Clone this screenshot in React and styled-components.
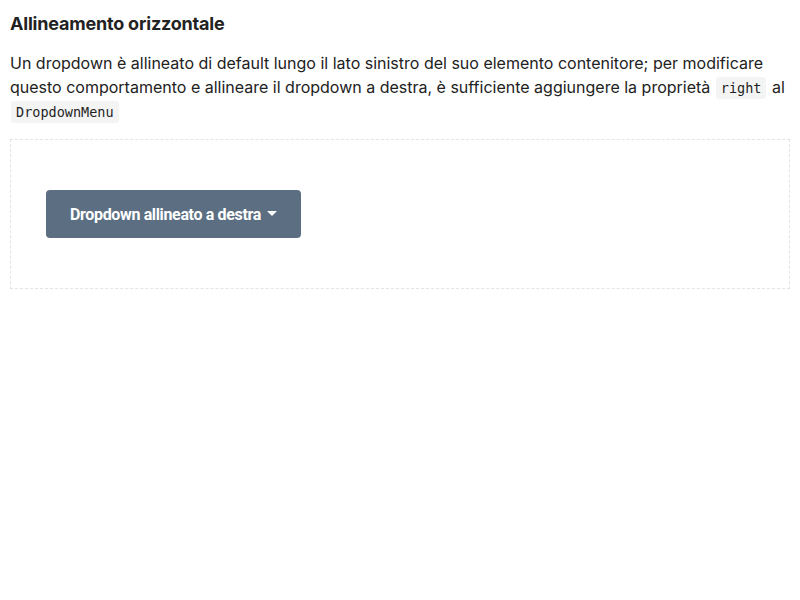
import React from 'react';
import styled, { createGlobalStyle } from 'styled-components';

const Global = createGlobalStyle`
  body {
    margin: 0;
    background: #fff;
    font-family: Inter, "Liberation Sans", sans-serif;
    color: #1f1f1f;
  }
`;

const Page = styled.div`
  padding: 10px 10px;
`;

const Title = styled.h3`
  margin: 2px 0 15px;
  font-size: 18px;
  font-weight: 700;
  line-height: 24px;
  letter-spacing: -0.2px;
  color: #222;
`;

const Text = styled.p`
  margin: 0 0 16px;
  font-size: 16px;
  line-height: 24px;
  color: #222;
`;

const Code = styled.code`
  font-family: "DejaVu Sans Mono", "Liberation Mono", monospace;
  font-size: 13.5px;
  line-height: 1;
  background: #f4f4f5;
  border-radius: 3px;
  padding: 3px 5px;
  margin: 0 1px;
  color: #1f1f1f;
`;

const Example = styled.div`
  border: 1px dashed #e3e4e6;
  padding: 50px 35px;
`;

const Button = styled.button`
  display: inline-flex;
  align-items: center;
  gap: 6px;
  height: 48px;
  padding: 0 24px;
  border: none;
  border-radius: 4px;
  background: #5c6f82;
  color: #fff;
  font-family: Roboto, "Liberation Sans", sans-serif;
  font-weight: 700;
  font-size: 16px;
  letter-spacing: -0.35px;
  cursor: pointer;
`;

const Caret = styled.span`
  width: 0;
  height: 0;
  border-left: 5px solid transparent;
  border-right: 5px solid transparent;
  border-top: 5px solid #fff;
  margin-top: -2px;
`;

const App = () => (
  <Page>
    <Global />
    <Title>Allineamento orizzontale</Title>
    <Text>
      Un dropdown è allineato di default lungo il lato sinistro del suo elemento contenitore; per modificare
      questo comportamento e allineare il dropdown a destra, è sufficiente aggiungere la proprietà <Code>right</Code> al{' '}
      <Code>DropdownMenu</Code>
    </Text>
    <Example>
      <Button>
        Dropdown allineato a destra
        <Caret />
      </Button>
    </Example>
  </Page>
);

export default App;
